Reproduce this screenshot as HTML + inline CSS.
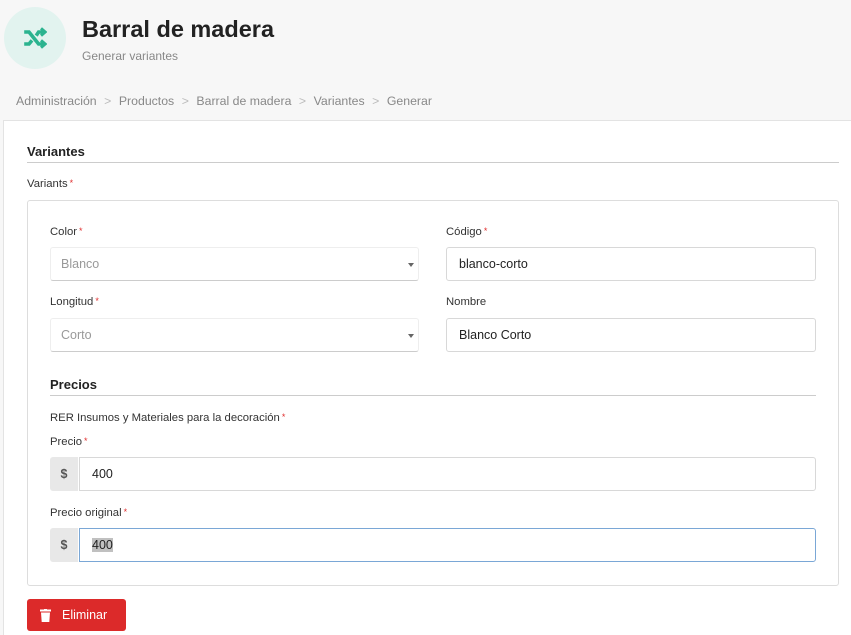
<!DOCTYPE html>
<html><head><meta charset="utf-8"><style>
*{box-sizing:border-box;margin:0;padding:0}
body{width:851px;height:635px;overflow:hidden;background:#f7f7f7;font-family:"Liberation Sans",sans-serif;color:#222;position:relative}
.abs{position:absolute}
.icon{left:4px;top:7px;width:62px;height:62px;border-radius:50%;background:#e2f3ef}
h1{left:82px;top:16px;font-size:23.5px;font-weight:bold;color:#222}
.sub{left:82px;top:49px;font-size:12px;color:#888}
.bc{left:16px;top:94px;font-size:12.3px;color:#888;white-space:nowrap}
.bc span.s{color:#bbb;margin:0 7.5px}
.card{left:3px;top:120px;width:848px;height:515px;background:#fff;border:1px solid #e3e3e3;border-right:none;border-bottom:none}
.t{font-size:11.3px;color:#333}
.req{color:#e03030;font-size:9px;vertical-align:top;margin-left:2px}
.inner{left:27px;top:200px;width:812px;height:386px;border:1px solid #ddd;border-radius:3px;background:#fff}
.inp{border:1px solid #d8d8d8;border-radius:3px;height:34px;font-size:12.5px;padding:0 12px;line-height:32px;color:#222;background:#fff}
.sel{color:#999;border-color:#eee;border-bottom-color:#ccc;padding-left:10px}
.sel:after{content:"";position:absolute;right:4px;top:15px;border:3px solid transparent;border-top:4px solid #666}
.pre{width:28px;height:34px;background:#e8e8e8;border-radius:3px 0 0 3px;font-size:12.5px;font-weight:bold;color:#555;text-align:center;line-height:34px}
.btn{left:27px;top:599px;width:99px;height:32px;background:#dc2a2a;border-radius:3px;color:#fff;font-size:12.5px;line-height:32px;padding-left:35px}
</style></head><body>
<div class="abs icon"><svg class="abs" style="left:19px;top:19px" width="24" height="24" viewBox="0 0 20 20" fill="none" stroke="#2bb38f" stroke-width="3"><path d="M1 5h4l8 10h4M1 15h4l2.5-3M11 8l2-3h4"/><path d="M15 2l3.5 3-3.5 3M15 12l3.5 3-3.5 3" stroke-width="2.5"/></svg></div>
<h1 class="abs">Barral de madera</h1>
<div class="abs sub">Generar variantes</div>
<div class="abs bc">Administración<span class="s">&gt;</span>Productos<span class="s">&gt;</span>Barral de madera<span class="s">&gt;</span>Variantes<span class="s">&gt;</span>Generar</div>
<div class="abs card"></div>
<div class="abs" style="left:27px;top:144px;font-size:13px;font-weight:bold">Variantes</div>
<div class="abs" style="left:27px;top:162px;width:812px;height:1px;background:#ccc"></div>
<div class="abs t" style="left:27px;top:178px">Variants<span class="req">*</span></div>
<div class="abs inner"></div>
<div class="abs t" style="left:50px;top:226px">Color<span class="req">*</span></div>
<div class="abs inp sel" style="left:50px;top:247px;width:369px">Blanco</div>
<div class="abs t" style="left:446px;top:226px">Código<span class="req">*</span></div>
<div class="abs inp" style="left:446px;top:247px;width:370px">blanco-corto</div>
<div class="abs t" style="left:50px;top:296px">Longitud<span class="req">*</span></div>
<div class="abs inp sel" style="left:50px;top:318px;width:369px">Corto</div>
<div class="abs t" style="left:446px;top:296px">Nombre</div>
<div class="abs inp" style="left:446px;top:318px;width:370px">Blanco Corto</div>
<div class="abs" style="left:50px;top:377px;font-size:13px;font-weight:bold">Precios</div>
<div class="abs" style="left:50px;top:395px;width:766px;height:1px;background:#ccc"></div>
<div class="abs t" style="left:50px;top:412px">RER Insumos y Materiales para la decoración<span class="req">*</span></div>
<div class="abs t" style="left:50px;top:436px">Precio<span class="req">*</span></div>
<div class="abs pre" style="left:50px;top:457px">$</div>
<div class="abs inp" style="left:79px;top:457px;width:737px;border-radius:0 3px 3px 0">400</div>
<div class="abs t" style="left:50px;top:507px">Precio original<span class="req">*</span></div>
<div class="abs pre" style="left:50px;top:528px">$</div>
<div class="abs inp" style="left:79px;top:528px;width:737px;border-color:#7aa7d6;border-radius:0 3px 3px 0"><span style="background:#c0c0c0">400</span></div>
<div class="abs btn"><svg class="abs" style="left:13px;top:10px" width="11" height="13" viewBox="0 0 11 13"><rect x="0" y="0.5" width="11" height="2" fill="#fff"/><rect x="4" y="0" width="3" height="1" fill="#fff"/><path d="M1 3.5h9l-.7 9.5H1.7z" fill="#fff"/></svg>Eliminar</div>
</body></html>
